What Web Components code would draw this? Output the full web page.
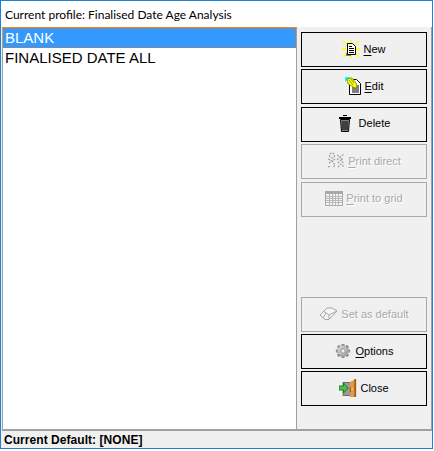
<!DOCTYPE html>
<html>
<head>
<meta charset="utf-8">
<style>
html, body { margin: 0; padding: 0; background: #fff; }
</style>
</head>
<body>
<profile-window heading="Current profile: Finalised Date Age Analysis" status="Current Default: [NONE]">
    <profile-list slot="list">
        <list-row selected>BLANK</list-row>
        <list-row>FINALISED DATE ALL</list-row>
    </profile-list>
    <button-stack slot="top">
        <tool-button icon="new" key="N" rest="ew"></tool-button>
        <tool-button icon="edit" key="E" rest="dit"></tool-button>
        <tool-button icon="delete" rest="Delete"></tool-button>
        <tool-button icon="printer" key="P" rest="rint direct" disabled></tool-button>
        <tool-button icon="grid" key="P" rest="rint to grid" disabled></tool-button>
    </button-stack>
    <button-stack slot="bottom" tight>
        <tool-button icon="eraser" rest="Set as default" disabled></tool-button>
        <tool-button icon="gear" key="O" rest="ptions"></tool-button>
        <tool-button icon="door" rest="Close"></tool-button>
    </button-stack>
</profile-window>

<script>
const ICONS = {
    new: `<svg width="18" height="18" viewBox="0 0 18 18">
        <path d="M9 0v3M9 15v3M0 9h4M14 9h4M1 1l4 3M17 1l-4 3M1 17l4-3M17 17l-4-3" stroke="#ff0" stroke-width="1.500"/>
        <rect x="3" y="4" width="12" height="11" fill="#ff0" opacity=".35"/>
        <rect x="4" y="13" width="5" height="3" fill="#808080"/>
        <path d="M5.500 3.500h5l3 3v8h-8z" fill="#fff" stroke="#000"/>
        <path d="M7 6.500h3M7 8.500h5M7 10.500h5M7 12.500h5" stroke="#000"/>
    </svg>`,
    edit: `<svg width="17" height="18" viewBox="0 0 17 18">
        <path d="M0 0h6L0 5z" fill="#0ff"/>
        <path d="M4.500 2.500h7l4 4v11h-11z" fill="#fff" stroke="#000"/>
        <path d="M10 9h4M7 11h7M7 13h7M7 15h7" stroke="#000"/>
        <path d="M2 2l5-1 4 5 1 4-2 1-7-4z" fill="#ff0" stroke="#808000" stroke-width=".8"/>
        <path d="M4 3l4 5M6 2l3 4" stroke="#808000" stroke-width=".8"/>
    </svg>`,
    // extra blank space on the right, the glyph only fills 14px
    delete: `<svg width="18" height="17" viewBox="0 0 18 17">
        <path d="M5 .5h4M1 2.500h12M1 3.500h12" stroke="#000"/>
        <path d="M2.500 4.500h9l-1 12h-7z" fill="#808080" stroke="#000"/>
        <path d="M5 6v9M7 6v9M9 6v9" stroke="#000"/>
    </svg>`,
    printer: `<svg width="18" height="17" viewBox="0 0 18 17" fill="none" stroke="#a0a0a0" stroke-width="1.200" stroke-dasharray="2 1">
        <circle cx="5" cy="3.500" r="2.500"/>
        <path d="M1 7l4 2 3-2M2 11l3-2 3 4-2 3M1 15l3-1M10 3l3 2 4-3M10 8l3-3 3 3M11 11l3-3 3 4M11 15l3-3 3 3"/>
    </svg>`,
    grid: `<svg width="18" height="15" viewBox="0 0 18 15" shape-rendering="crispEdges">
        <rect x=".5" y=".5" width="17" height="14" fill="#f4f4f4" stroke="#a8a8a8"/>
        <rect x="1" y="1" width="16" height="2" fill="#a8a8a8"/>
        <path d="M1 5.500h16M1 7.500h16M1 9.500h16M1 11.500h16M4.500 3v11M7.500 3v11M10.500 3v11M13.500 3v11" stroke="#b8b8b8"/>
    </svg>`,
    eraser: `<svg width="19" height="14" viewBox="0 0 19 14" fill="none" stroke="#a8a8a8" stroke-linejoin="round">
        <path d="M1 8l7-7h5l5 3-8 8.500H6z" fill="#f6f6f6"/>
        <path d="M5 4.500l5 3.500 8-4M10 8v4M7 6l-3 5"/>
    </svg>`,
    gear: `<svg width="18" height="16" viewBox="0 0 18 18" preserveAspectRatio="xMinYMid">
        <path d="M9 1v16M1 9h16M3.300 3.300l11.400 11.400M14.700 3.300L3.300 14.700" stroke="#8e8e8e" stroke-width="3.500"/>
        <circle cx="9" cy="9" r="6.500" fill="#a4a4a4"/>
        <circle cx="8" cy="8" r="5" fill="#c8c8c8"/>
        <circle cx="9" cy="9" r="2.500" fill="#f0f0f0" stroke="#707070" stroke-width=".8"/>
    </svg>`,
    door: `<svg width="18" height="18" viewBox="0 0 20 18" preserveAspectRatio="none">
        <rect x="4" y="3" width="9" height="14" fill="#6e6e6e"/>
        <rect x="5" y="4" width="8" height="12" fill="#9a9a9a"/>
        <path d="M12 3l7-3v18h-7z" fill="#e09a4a"/>
        <rect x="17" y="0" width="2" height="18" fill="#a85a18"/>
        <rect x="12" y="8" width="1" height="5" fill="#8a4a10"/>
        <rect x="14" y="9" width="1" height="2" fill="#fff080"/>
        <path d="M0 7h5V4l5 5-5 5v-3H0z" fill="#4cc04c" stroke="#1a7a1a" stroke-width="1"/>
    </svg>`
};

// main dialog frame
class ProfileWindow extends HTMLElement {
    constructor() {
        super();
        this.attachShadow({mode: 'open'});
        this.shadowRoot.innerHTML = `
        <style>
            :host {
                display: flex;
                flex-direction: column;
                box-sizing: border-box;
                width: 433px;
                height: 449px;
                border: 1px solid #1883d7;
                background: #f0f0f0;
            }
            header {
                height: 26px;
                box-sizing: border-box;
                background: #fff;
                padding: 7px 0 0 4px;
                font: 12px/14px Lato, "Noto Sans", sans-serif;
                color: #000;
            }
            #main {
                flex: 1;
                display: flex;
                min-height: 0;
                margin-left: 1px;
                border-bottom: 2px solid #a0a0a0;
            }
            #left {
                width: 293px;
                flex: none;
                background: #fff;
                border-left: 1px solid #a0a0a0;
                display: flex;
            }
            #right {
                flex: 1;
                display: flex;
                flex-direction: column;
                justify-content: space-between;
                padding: 5px 4px 23px 4px;
                border-left: 1px solid #a0a0a0;
                border-right: 1px solid #a0a0a0;
            }
            footer {
                height: 17px;
                box-sizing: border-box;
                padding: 2px 0 0 3px;
                font: bold 12px/14px "Liberation Sans", Arial, sans-serif;
                letter-spacing: .05px;
                color: #000;
            }
        </style>
        <header></header>
        <div id="main">
            <div id="left"><slot name="list"></slot></div>
            <div id="right">
                <slot name="top"></slot>
                <slot name="bottom"></slot>
            </div>
        </div>
        <footer></footer>
        `;
        this.shadowRoot.querySelector('header').textContent = this.getAttribute('heading');
        this.shadowRoot.querySelector('footer').textContent = this.getAttribute('status');
    }
}

class ProfileList extends HTMLElement {
    constructor() {
        super();
        this.attachShadow({mode: 'open'});
        this.shadowRoot.innerHTML = `
        <style>
            :host {
                display: block;
                width: 293px;
                border-top: 1px solid #e68b2c;
                box-sizing: border-box;
            }
        </style>
        <slot></slot>
        `;
    }
}

class ListRow extends HTMLElement {
    constructor() {
        super();
        this.attachShadow({mode: 'open'});
        this.shadowRoot.innerHTML = `
        <style>
            :host {
                display: block;
                height: 20px;
                box-sizing: border-box;
                padding: 2px 0 0 2px;
                font: 15px/16px "Liberation Sans", Arial, sans-serif;
                color: #000;
            }
            :host([selected]) {
                background: #3399ff;
                color: #fff;
                outline: 1px dotted #c97a3a;
                outline-offset: -1px;
            }
        </style>
        <slot></slot>
        `;
    }
}

class ButtonStack extends HTMLElement {
    constructor() {
        super();
        this.attachShadow({mode: 'open'});
        this.shadowRoot.innerHTML = `
        <style>
            :host {
                display: flex;
                flex-direction: column;
                gap: 2.4px;
            }
            :host([tight]) {
                gap: 2px;
            }
        </style>
        <slot></slot>
        `;
    }
}

class ToolButton extends HTMLElement {
    constructor() {
        super();
        this.attachShadow({mode: 'open'});
        this.shadowRoot.innerHTML = `
        <style>
            :host {
                display: flex;
                align-items: center;
                justify-content: center;
                gap: 3px;
                box-sizing: border-box;
                height: 35px;
                padding-bottom: 2px;
                border: 1px solid #000;
                font: 11px/14px "Liberation Sans", Arial, sans-serif;
                color: #000;
            }
            :host([disabled]) {
                border-color: #a8a8a8;
                color: #a8a8a8;
                text-shadow: 1px 1px 0 #fff;
            }
            #icon { display: flex; }
            u { text-underline-offset: 2px; }
        </style>
        <span id="icon"></span>
        <span id="label"></span>
        `;
        this.shadowRoot.getElementById('icon').innerHTML = ICONS[this.getAttribute('icon')];
        const key = this.getAttribute('key');
        this.shadowRoot.getElementById('label').innerHTML =
            (key ? '<u>' + key + '</u>' : '') + this.getAttribute('rest');
    }
}

customElements.define('profile-window', ProfileWindow);
customElements.define('profile-list', ProfileList);
customElements.define('list-row', ListRow);
customElements.define('button-stack', ButtonStack);
customElements.define('tool-button', ToolButton);
</script>
</body>
</html>
